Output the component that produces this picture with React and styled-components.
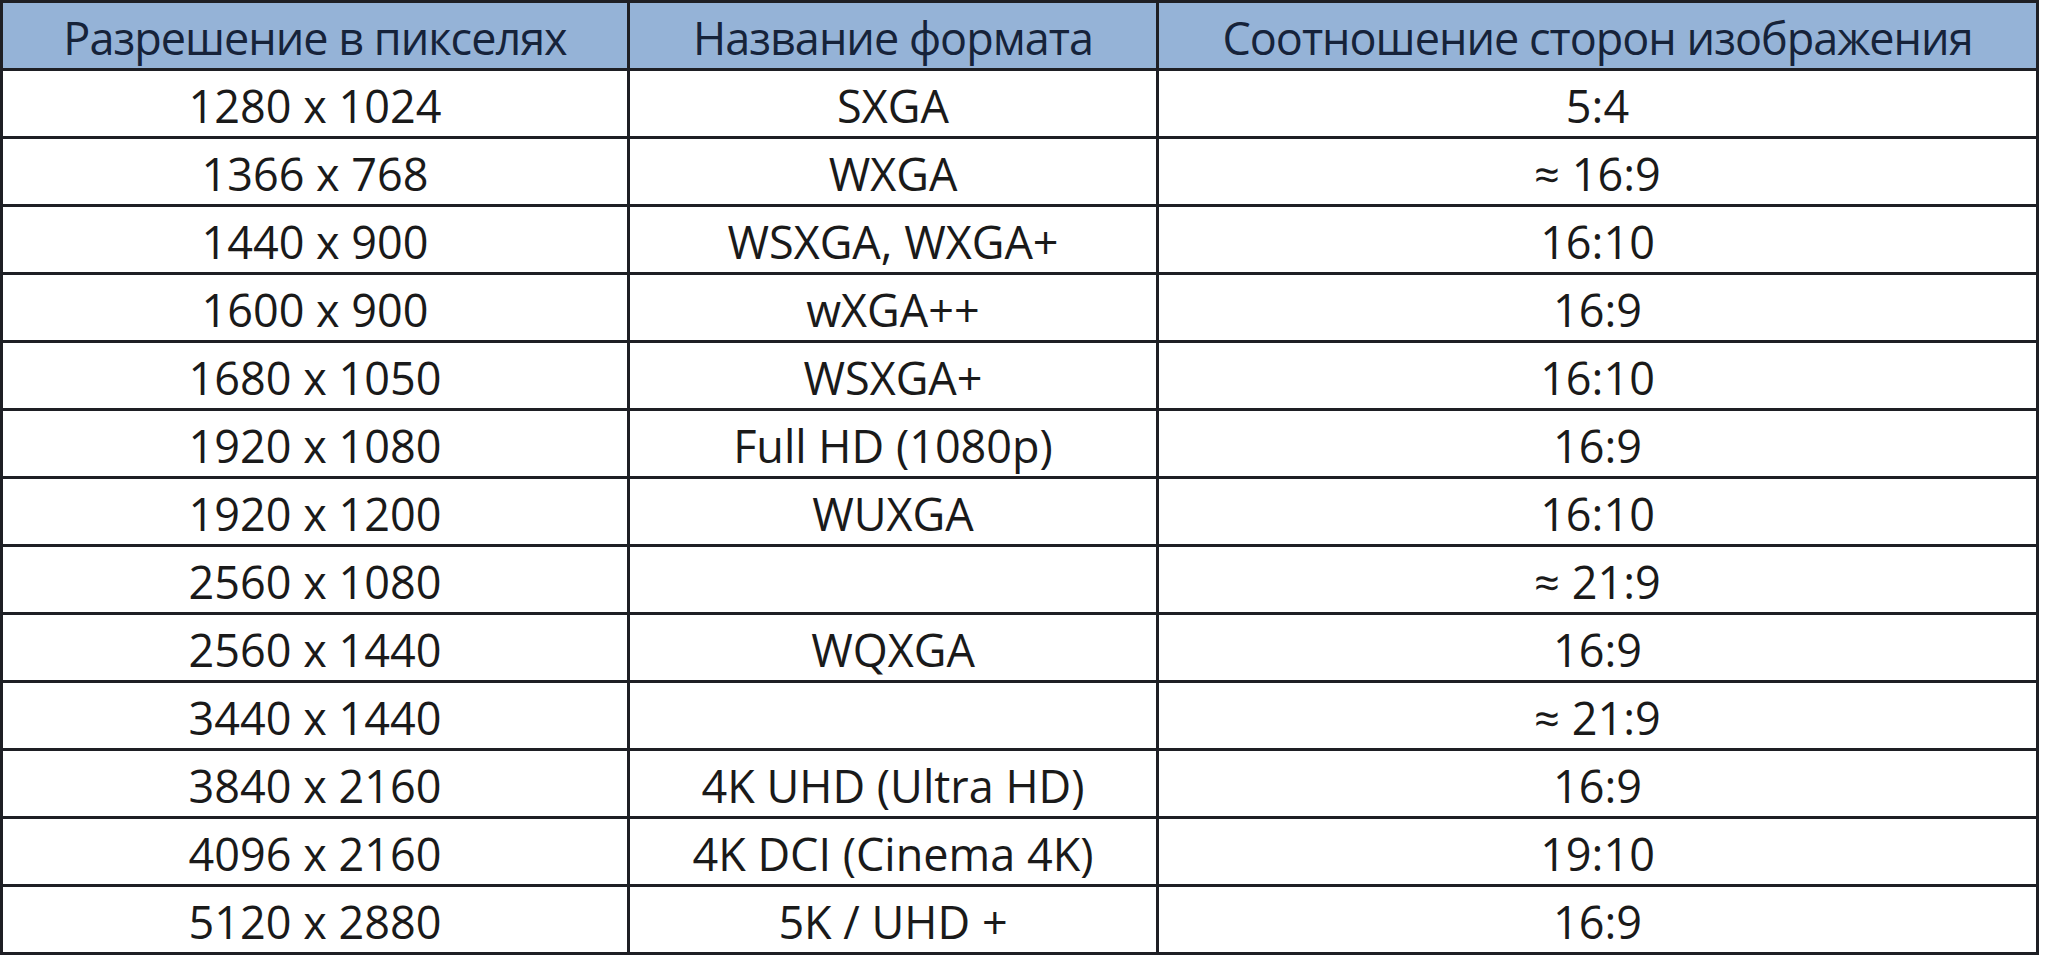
import React from "react";
import styled, { createGlobalStyle } from "styled-components";

const GlobalStyle = createGlobalStyle`
  html, body {
    margin: 0;
    padding: 0;
    background: #fff;
  }
  body {
    font-family: "Open Sans", "Noto Sans", sans-serif;
  }
`;

const Grid = styled.div`
  display: grid;
  grid-template-columns: 624px 526px 877px;
  grid-auto-rows: 65px;
  gap: 3px;
  padding: 3px;
  width: max-content;
  background: #1e1f24;
`;

const Cell = styled.div`
  display: flex;
  align-items: center;
  justify-content: center;
  padding-top: 3px;
  box-sizing: border-box;
  font-size: 45px;
  white-space: nowrap;
  background: ${(p) => (p.$head ? "#95b3d7" : "#fff")};
  color: ${(p) => (p.$head ? "#16233a" : "#1a1a1a")};
  letter-spacing: ${(p) => (p.$head ? "-1px" : "0")};
`;

const headers = [
  "Разрешение в пикселях",
  "Название формата",
  "Соотношение сторон изображения",
];

const rows = [
  ["1280 x 1024", "SXGA", "5:4"],
  ["1366 x 768", "WXGA", "≈ 16:9"],
  ["1440 x 900", "WSXGA, WXGA+", "16:10"],
  ["1600 x 900", "wXGA++", "16:9"],
  ["1680 x 1050", "WSXGA+", "16:10"],
  ["1920 x 1080", "Full HD (1080p)", "16:9"],
  ["1920 x 1200", "WUXGA", "16:10"],
  ["2560 x 1080", "", "≈ 21:9"],
  ["2560 x 1440", "WQXGA", "16:9"],
  ["3440 x 1440", "", "≈ 21:9"],
  ["3840 x 2160", "4K UHD (Ultra HD)", "16:9"],
  ["4096 x 2160", "4K DCI (Cinema 4K)", "19:10"],
  ["5120 x 2880", "5K / UHD +", "16:9"],
];

export default function App() {
  return (
    <>
      <GlobalStyle />
      <Grid>
        {headers.map((h) => (
          <Cell key={h} $head>
            {h}
          </Cell>
        ))}
        {rows.map((row, i) =>
          row.map((text, j) => <Cell key={`${i}-${j}`}>{text}</Cell>)
        )}
      </Grid>
    </>
  );
}
